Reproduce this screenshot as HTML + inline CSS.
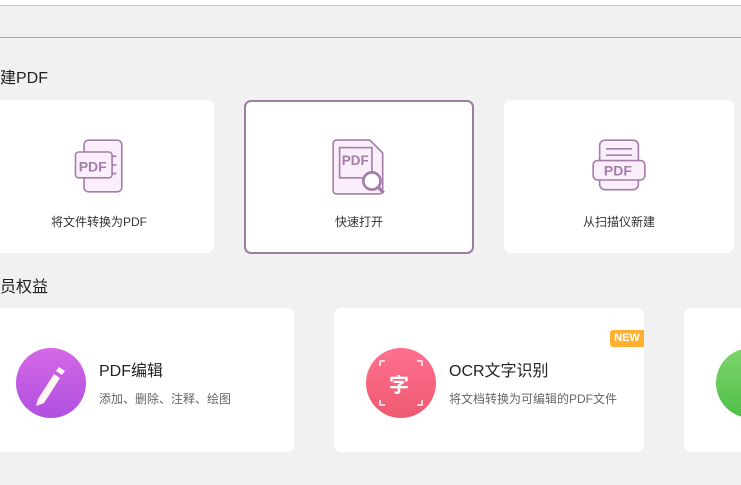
<!DOCTYPE html>
<html><head><meta charset="utf-8"><style>
body{margin:0;width:741px;height:485px;overflow:hidden;background:#f1f1f1;font-family:"Liberation Sans","Noto Sans CJK SC",sans-serif;position:relative;color:#333}
.a{position:absolute}
.card{position:absolute;background:#fff;border-radius:7px;box-sizing:border-box}
.lbl{position:absolute;width:100%;text-align:center;font-size:12px;top:113px;color:#333}
.ic{position:absolute;left:50%;top:38px;margin-left:-28px}
.circ{position:absolute;width:70px;height:70px;border-radius:50%;top:40px}
.t{position:absolute;font-size:16px;top:49px;color:#222}
.s{position:absolute;font-size:12px;top:82px;color:#666}
</style></head><body>
<div class="a" style="left:0;top:0;width:741px;height:5px;background:#fff;border-bottom:1px solid #c8c8c8"></div>
<div class="a" style="left:0;top:37px;width:741px;height:1px;background:#a8a8a8"></div>
<div class="a" style="left:0;top:67px;font-size:16px;color:#222;margin-top:-3px">建PDF</div>
<div class="card" style="left:-20px;top:100px;width:234px;height:153px">
<svg class="ic" width="56" height="56" viewBox="0 0 52 52"><rect x="14" y="2" width="35" height="48" rx="4" fill="#fbeefb" stroke="#a27ea8" stroke-width="1.5"/><rect x="6" y="13" width="34" height="24" rx="3" fill="#fbeefb" stroke="#a27ea8" stroke-width="1.5"/><text x="9" y="31" font-size="13" font-weight="bold" fill="#a27ea8" font-family="Liberation Sans">PDF</text><path d="M40 17h4M40 25h4M40 33h4" stroke="#a27ea8" stroke-width="1.5"/></svg>
<div class="lbl" style="left:2px">将文件转换为PDF</div></div>
<div class="card" style="left:244px;top:100px;width:230px;height:154px;border:2px solid #9d7ba3">
<svg class="ic" style="top:37px" width="56" height="56" viewBox="0 0 52 52"><path d="M2 4a3 3 0 0 1 3-3h31l12 12v35a3 3 0 0 1-3 3H5a3 3 0 0 1-3-3z" fill="#fbeefb" stroke="#a27ea8" stroke-width="1.5"/><rect x="8" y="8" width="30" height="28" fill="#fbeefb" stroke="#a27ea8" stroke-width="1.5"/><text x="10" y="24" font-size="12.5" font-weight="bold" fill="#a27ea8" font-family="Liberation Sans">PDF</text><circle cx="38" cy="39" r="8" fill="#fff" stroke="#a27ea8" stroke-width="2.5"/><path d="M44 45l5 5" stroke="#a27ea8" stroke-width="3"/></svg>
<div class="lbl" style="top:111px">快速打开</div></div>
<div class="card" style="left:504px;top:100px;width:230px;height:153px">
<svg class="ic" width="56" height="56" viewBox="0 0 52 52"><rect x="8" y="2" width="36" height="46" rx="5" fill="#fbeefb" stroke="#a27ea8" stroke-width="1.5"/><path d="M14 10h24M14 16h24" stroke="#a27ea8" stroke-width="1.5"/><rect x="2" y="21" width="48" height="18" rx="4" fill="#fbeefb" stroke="#a27ea8" stroke-width="1.5"/><text x="12" y="35" font-size="13" font-weight="bold" fill="#a27ea8" font-family="Liberation Sans">PDF</text></svg>
<div class="lbl">从扫描仪新建</div></div>
<div class="a" style="left:0;top:273px;font-size:16px;color:#222">员权益</div>
<div class="card" style="left:-20px;top:308px;width:314px;height:144px">
<div class="circ" style="left:36px;background:linear-gradient(#d568e6,#b04fe0)"></div>
<svg class="a" style="left:50px;top:55px" width="40" height="45" viewBox="0 0 40 45"><path d="M8 36l16-25 6 4-16 25-8 3z" fill="#fff4f4"/><path d="M26 8l3-4 6 4-3 4z" fill="#fff4f4"/></svg>
<div class="t" style="left:119px">PDF编辑</div><div class="s" style="left:119px">添加、删除、注释、绘图</div></div>
<div class="card" style="left:334px;top:308px;width:310px;height:144px">
<div class="a" style="right:0;top:22px;width:34px;height:17px;background:#ffb02e;border-radius:3px 0 0 3px;color:#fff;font-size:11px;font-weight:bold;text-align:center;line-height:17px">NEW</div>
<div class="circ" style="left:32px;background:linear-gradient(#ff7090,#ee5a70)"></div>
<div class="a" style="left:55px;top:61px;font-size:20px;font-weight:bold;color:#fff">字</div>
<svg class="a" style="left:45px;top:52px" width="44" height="46"><path d="M1 6V1h5M38 1h5v5M1 40v5h5M38 45h5v-5" stroke="#fff" fill="none" stroke-width="1.5"/></svg>
<div class="t" style="left:115px">OCR文字识别</div><div class="s" style="left:115px">将文档转换为可编辑的PDF文件</div></div>
<div class="card" style="left:684px;top:308px;width:80px;height:144px">
<div class="circ" style="left:32px;background:linear-gradient(#7ed56a,#4fbf48)"></div></div>
</body></html>
